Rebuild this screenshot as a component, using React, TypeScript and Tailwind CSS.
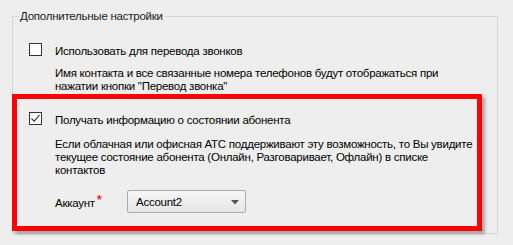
import React from "react";

function Checkbox({ checked }: { checked?: boolean }) {
  return (
    <div className="mt-[1px] h-[13px] w-[13px] shrink-0 border border-[#333333] bg-white flex items-center justify-center">
      {checked && (
        <svg width="11" height="11" viewBox="0 0 11 11" fill="none">
          <path d="M1.5 5.5 L4.2 8.2 L9.5 2.2" stroke="#333333" strokeWidth="1.1" />
        </svg>
      )}
    </div>
  );
}

export default function App() {
  return (
    <div
      className="w-[513px] h-[245px] bg-[#eeeeee] pt-[8px] pl-[12px] text-[11.5px] tracking-[-0.25px] text-[#000000]"
      style={{ fontFamily: '"Liberation Sans", Arial, sans-serif' }}
    >
      <fieldset className="w-[486px] border border-[#d6d6d6] pb-[2px]">
        <legend className="ml-[5px] px-[2px] leading-[16px] text-[#1a1a1a]">
          Дополнительные настройки
        </legend>

        <div className="flex pl-[16px] pt-[18px]">
          <Checkbox />
          <div className="ml-[13px] flex flex-col whitespace-nowrap pt-[2px]">
            <div className="leading-[14px]">Использовать для перевода звонков</div>
            <div className="mt-[9px] leading-[13px]">
              <div>Имя контакта и все связанные номера телефонов будут отображаться при</div>
              <div>нажатии кнопки "Перевод звонка"</div>
            </div>
          </div>
        </div>

        <div className="ml-[-1px] mt-[1px] w-[470px] border-[5px] border-[#ff0000] pl-[12px] pt-[12px] pb-[13px] shadow-[3px_3px_3px_rgba(0,0,0,0.3)]">
          <div className="flex">
            <Checkbox checked />
            <div className="ml-[13px] flex flex-col whitespace-nowrap pt-[2px]">
              <div className="leading-[14px]">Получать информацию о состоянии абонента</div>
              <div className="mt-[11px] leading-[13px]">
                <div>Если облачная или офисная АТС поддерживают эту возможность, то Вы увидите</div>
                <div>текущее состояние абонента (Онлайн, Разговаривает, Офлайн) в списке</div>
                <div>контактов</div>
              </div>
              <div className="mt-[13px] flex items-center">
                <div className="w-[72px] flex items-start">
                  <span className="leading-[14px] mt-[2px]">Аккаунт</span>
                  <span className="ml-[2px] text-[#ff2020] font-bold leading-[12px] text-[12px]">*</span>
                </div>
                <div className="relative flex h-[23px] w-[119px] items-center rounded-[2px] border border-[#acacac] bg-gradient-to-b from-[#f7f7f7] to-[#e6e6e6] pl-[8px]">
                  <span className="leading-[14px]">Account2</span>
                  <svg
                    className="absolute right-[6px] top-[9px]"
                    width="8"
                    height="5"
                    viewBox="0 0 8 5"
                  >
                    <path d="M0 0 H8 L4 4.5 Z" fill="#555555" />
                  </svg>
                </div>
              </div>
            </div>
          </div>
        </div>
      </fieldset>
    </div>
  );
}
